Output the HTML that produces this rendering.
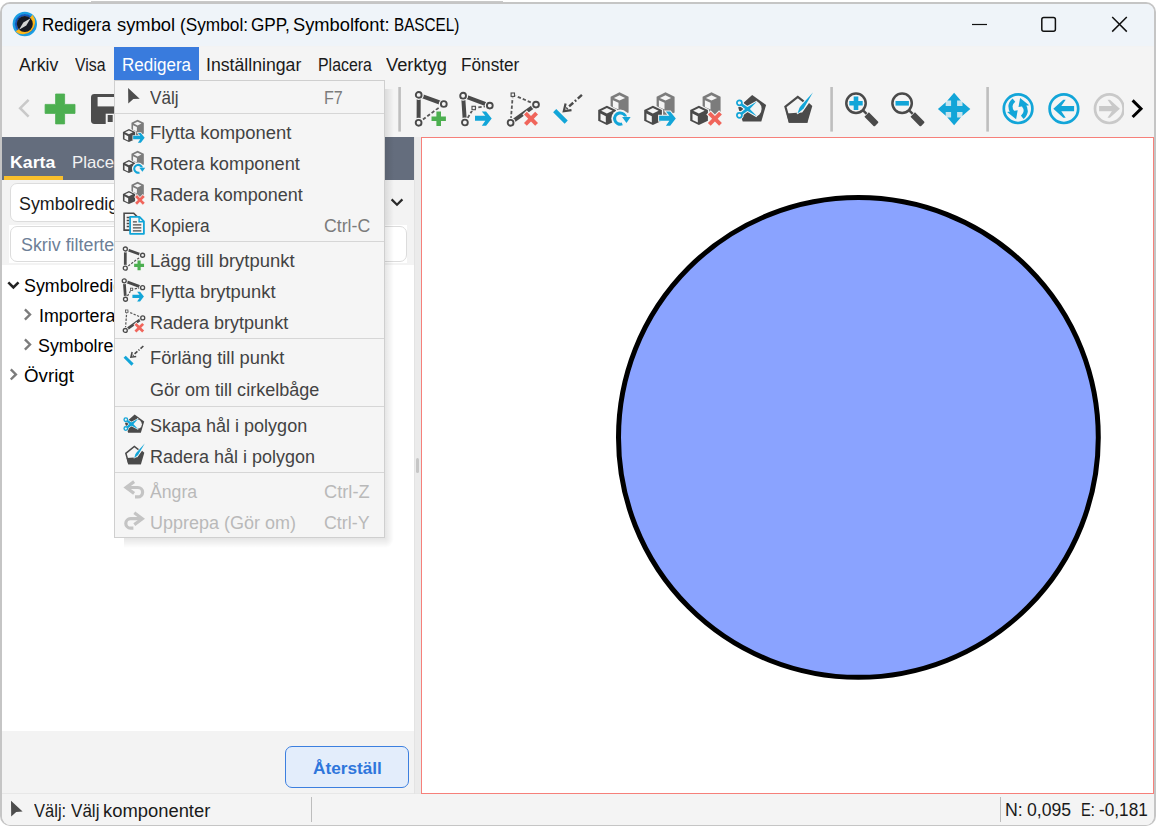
<!DOCTYPE html>
<html lang="sv">
<head>
<meta charset="utf-8">
<title>Redigera symbol</title>
<style>
html,body{margin:0;padding:0}
body{width:1156px;height:826px;overflow:hidden;position:relative;background:#fff;font-family:"Liberation Sans",sans-serif;font-size:17.5px}
.abs{position:absolute}
.t{position:absolute;white-space:pre;line-height:1;transform-origin:0 50%;font-size:17.5px}
#desk{position:absolute;left:0;top:0;width:1156px;height:826px;background:#fff}
#win{position:absolute;left:0;top:2px;width:1156px;height:824px;box-sizing:border-box;border:2px solid #c5c5c5;border-bottom-width:1px;border-radius:10px;background:#f3f3f3;overflow:hidden}
#wi{position:absolute;left:-1px;top:-1px;width:1154px;height:821px}
#titlebar{position:absolute;left:0;top:0;width:1154px;height:43px;background:#eff4f9}
#chrome{position:absolute;left:0;top:44px;width:1154px;height:90px;background:#f4f4f4}
#mhl{position:absolute;left:113px;top:44px;width:85px;height:33px;background:#397bdd}
#tabs{position:absolute;left:1px;top:134px;width:412px;height:43px;background:#646d7d}
#tabul{position:absolute;left:3px;top:173px;width:59px;height:4px;background:#f9bf2c}
#lpanel{position:absolute;left:1px;top:177px;width:412px;height:613px;background:#f3f3f3}
#combo{position:absolute;left:9px;top:180px;width:366px;height:37px;border:1px solid #dcdcdc;border-radius:7px;background:#fff}
#filter{position:absolute;left:9px;top:223px;width:395px;height:34px;border:1px solid #dcdcdc;border-radius:7px;background:#fff}
#tree{position:absolute;left:1px;top:262px;width:412px;height:466px;background:#fff}
#split{position:absolute;left:413px;top:134px;width:7px;height:656px;background:#ebebeb}
#canvas{position:absolute;left:420px;top:134px;width:731px;height:655px;border:1px solid #f6807a;background:#fff}
#btn{position:absolute;left:284px;top:743px;width:122px;height:40px;border:1px solid #3c7fdf;border-radius:7px;background:#e3edfb}
#status{position:absolute;left:0;top:791px;width:1154px;height:33px;background:#f4f4f4}
.vsep{position:absolute;width:1px;background:#bdbdbd}
#menu{position:absolute;left:114px;top:80px;width:269px;height:456px;border:1px solid #cfcfcf;background:#f5f5f5;}
.sh{position:absolute;pointer-events:none}
.msep{position:absolute;left:0;width:269px;height:1px;background:#d6d6d6}
svg{position:absolute;overflow:visible}
</style>
</head>
<body>
<div id="desk"><div class="abs" style="left:91px;top:1px;width:412px;height:1px;background:#c9c9c9"></div></div>
<div id="win"><div id="wi">
  <div id="titlebar"></div>
  <div id="chrome"></div>
  <div id="mhl"></div>
  <div id="tabs"></div><div id="tabul"></div>
  <div id="lpanel"></div>
  <div class="abs" style="left:8px;top:222px;width:398px;height:38px;background:#fff"></div>
  <div id="combo"></div>
  <div id="filter"></div>
  <div id="tree"></div>
  <div id="split"></div>
  <div id="canvas"></div>
  <div id="btn"></div>
  <div id="status"></div>
  <div class="abs" style="left:1px;top:790px;width:419px;height:1px;background:#e7e7e7"></div>
  <div class="vsep" style="left:310px;top:794px;height:25px"></div>
  <div class="vsep" style="left:999px;top:794px;height:25px"></div>
</div></div>
<!-- page-coordinate overlay: text + vector art, coordinates are absolute page pixels -->
<div id="ov" class="abs" style="left:0;top:0;width:1156px;height:826px;overflow:hidden">
<span class="t" style="left:42.4px;top:17.0px;color:#000;transform:scaleX(0.9714)">Redigera</span>
<span class="t" style="left:116.6px;top:17.0px;color:#000;transform:scaleX(1.0491)">symbol</span>
<span class="t" style="left:179.5px;top:17.0px;color:#000;transform:scaleX(0.9851)">(Symbol:</span>
<span class="t" style="left:251.0px;top:17.0px;color:#000;transform:scaleX(0.9811)">GPP,</span>
<span class="t" style="left:293.1px;top:17.0px;color:#000;transform:scaleX(1.0456)">Symbolfont:</span>
<span class="t" style="left:393.9px;top:17.0px;color:#000;transform:scaleX(0.8726)">BASCEL)</span>
<span class="t" style="left:19.3px;top:56.8px;color:#1a1a1a;transform:scaleX(1.0103)">Arkiv</span>
<span class="t" style="left:74.7px;top:56.8px;color:#1a1a1a;transform:scaleX(0.9059)">Visa</span>
<span class="t" style="left:121.5px;top:56.8px;color:#fff;transform:scaleX(0.9729)">Redigera</span>
<span class="t" style="left:206.0px;top:56.8px;color:#1a1a1a;transform:scaleX(1.0098)">Inställningar</span>
<span class="t" style="left:317.8px;top:56.8px;color:#1a1a1a;transform:scaleX(0.9086)">Placera</span>
<span class="t" style="left:385.6px;top:56.8px;color:#1a1a1a;transform:scaleX(1.0456)">Verktyg</span>
<span class="t" style="left:461.4px;top:56.8px;color:#1a1a1a;transform:scaleX(0.9828)">Fönster</span>
<span class="t" style="left:9.9px;top:153.8px;color:#fff;font-size:16.5px;font-weight:700;transform:scaleX(1.0732)">Karta</span>
<span class="t" style="left:72.2px;top:153.8px;color:#f2f2f2;font-size:16.5px;transform:scaleX(1.0200)">Placera</span>
<span class="t" style="left:18.5px;top:195.9px;color:#1a1a1a;transform:scaleX(1.0200)">Symbolredigering</span>
<span class="t" style="left:20.7px;top:236.5px;color:#6d7f97;transform:scaleX(1.0200)">Skriv filtertext här</span>
<span class="t" style="left:23.6px;top:277.8px;color:#000;transform:scaleX(1.0200)">Symbolredigering</span>
<span class="t" style="left:38.5px;top:307.8px;color:#000;transform:scaleX(1.0200)">Importerade symboler</span>
<span class="t" style="left:37.6px;top:337.8px;color:#000;transform:scaleX(1.0200)">Symbolredigering</span>
<span class="t" style="left:23.7px;top:367.8px;color:#000;transform:scaleX(1.0696)">Övrigt</span>
<span class="t" style="left:312.6px;top:759.5px;color:#2f76db;font-size:16.5px;font-weight:700;transform:scaleX(1.0437)">Återställ</span>
<span class="t" style="left:33.5px;top:803.3px;color:#1a1a1a;transform:scaleX(0.9455)">Välj:</span>
<span class="t" style="left:70.6px;top:803.3px;color:#1a1a1a;transform:scaleX(0.9750)">Välj</span>
<span class="t" style="left:103.4px;top:803.3px;color:#1a1a1a;transform:scaleX(1.0505)">komponenter</span>
<span class="t" style="left:1005.2px;top:802.4px;color:#1a1a1a;transform:scaleX(1.0133)">N:</span>
<span class="t" style="left:1026.5px;top:802.4px;color:#1a1a1a;transform:scaleX(1.0071)">0,095</span>
<span class="t" style="left:1080.9px;top:802.4px;color:#1a1a1a;transform:scaleX(0.8357)">E:</span>
<span class="t" style="left:1099.3px;top:802.4px;color:#1a1a1a;transform:scaleX(0.9833)">-0,181</span>
<svg id="art" width="1156" height="826" viewBox="0 0 1156 826" style="left:0;top:0">
<defs>
  <path id="g-arrow" d="M0 4.2 H10.3 L6.8 0 H11.1 L16.7 6.9 L11.1 14.1 H6.8 L10.3 9.1 H0 Z" fill="#12a5d8" stroke="#f4f4f4" stroke-width="2" paint-order="stroke"/>
  <path id="g-plus" d="M-2.3 -7.2 H2.3 V-2.3 H7.2 V2.3 H2.3 V7.2 H-2.3 V2.3 H-7.2 V-2.3 H-2.3 Z" fill="#4caf50" stroke="#f4f4f4" stroke-width="2" paint-order="stroke"/>
  <path id="g-x" d="M-4.2 -7 L0 -2.8 L4.2 -7 L7 -4.2 L2.8 0 L7 4.2 L4.2 7 L0 2.8 L-4.2 7 L-7 4.2 L-2.8 0 L-7 -4.2 Z" fill="#f0655b" stroke="#f4f4f4" stroke-width="2.2" paint-order="stroke"/>
  <g id="g-cubes">
    <path d="M21.5 0.2 L30.6 4.75 V20.4 L21.5 25 L12.6 20.4 V4.75 Z" fill="#7c7c7c"/>
    <path d="M21.5 3.2 L27.1 5.9 L21.5 8.6 L15.9 5.9 Z" fill="#f4f4f4"/>
    <path d="M14.9 8.2 L20.5 10.8 V17.6 L14.9 14.9 Z" fill="#f4f4f4"/>
    <path d="M8.9 12.3 L19.1 17.4 V29.5 L8.9 34.3 L-1 29.5 V17.4 Z" fill="#f4f4f4"/>
    <path d="M8.9 13.7 L17.9 18.1 V28.7 L8.9 32.9 L0.2 28.7 V18.1 Z" fill="#4a4a4a"/>
    <path d="M8.9 15.9 L14.6 18.7 L8.9 21.5 L3.2 18.7 Z" fill="#f4f4f4"/>
    <path d="M2.5 21.5 L7.8 24.2 V30.6 L2.5 28 Z" fill="#f4f4f4"/>
  </g>
  <g id="ic-addbp">
    <path d="M3.7 2.9 L28.8 12 M3.7 2.9 L3.6 30.8" stroke="#4a4a4a" stroke-width="4" fill="none"/>
    <path d="M3.6 30.8 L28.8 12" stroke="#585858" stroke-width="1.8" stroke-dasharray="3.4 2" fill="none"/>
    <circle cx="3.7" cy="2.9" r="5.1" fill="#f4f4f4"/><circle cx="28.8" cy="12" r="5.1" fill="#f4f4f4"/><circle cx="3.6" cy="30.8" r="5.1" fill="#f4f4f4"/><g fill="#f4f4f4" stroke="#4a4a4a" stroke-width="1.9"><circle cx="3.7" cy="2.9" r="2.9"/><circle cx="28.8" cy="12" r="2.9"/><circle cx="3.6" cy="30.8" r="2.9"/></g>
    <use href="#g-plus" x="23.7" y="26.8"/>
  </g>
  <g id="ic-movebp">
    <path d="M2.1 3.7 L28.8 13.6 M2.1 3.7 L3.9 30.5" stroke="#4a4a4a" stroke-width="4" fill="none"/>
    <path d="M3.9 30.5 L12.7 16 L28.8 13.6" stroke="#585858" stroke-width="1.8" stroke-dasharray="3.4 2" fill="none"/>
    <circle cx="2.1" cy="3.7" r="5.1" fill="#f4f4f4"/><circle cx="28.8" cy="13.6" r="5.1" fill="#f4f4f4"/><circle cx="3.9" cy="30.5" r="5.1" fill="#f4f4f4"/><g fill="#f4f4f4" stroke="#4a4a4a" stroke-width="1.9"><circle cx="2.1" cy="3.7" r="2.9"/><circle cx="28.8" cy="13.6" r="2.9"/><circle cx="3.9" cy="30.5" r="2.9"/></g>
    <rect x="9.8" y="13.1" width="5.8" height="5.8" fill="#f4f4f4"/><rect x="11.0" y="14.3" width="3.4" height="3.4" fill="#f4f4f4" stroke="#4a4a4a" stroke-width="1.1"/>
    <use href="#g-arrow" x="14" y="19.6"/>
  </g>
  <g id="ic-delbp">
    <path d="M5.8 2.7 L29 12.6 M5.8 2.7 L3.6 30.8" stroke="#585858" stroke-width="1.8" stroke-dasharray="3.4 2" fill="none"/>
    <path d="M3.6 30.8 L29 12.6" stroke="#4a4a4a" stroke-width="4" fill="none"/>
    <circle cx="29" cy="12.6" r="5.1" fill="#f4f4f4"/><circle cx="3.6" cy="30.8" r="5.1" fill="#f4f4f4"/><g fill="#f4f4f4" stroke="#4a4a4a" stroke-width="1.9"><circle cx="29" cy="12.6" r="2.9"/><circle cx="3.6" cy="30.8" r="2.9"/></g>
    <rect x="2.9" y="-0.2" width="5.8" height="5.8" fill="#f4f4f4"/><rect x="4.1" y="1.0" width="3.4" height="3.4" fill="#f4f4f4" stroke="#4a4a4a" stroke-width="1.1"/>
    <use href="#g-x" x="24" y="26.8"/>
  </g>
  <g id="ic-extend">
    <path d="M2.7 18.6 L14.2 30.1" stroke="#12a5d8" stroke-width="4.4" fill="none"/>
    <path d="M29.9 2.9 L14.5 16.8" stroke="#4a4a4a" stroke-width="2.4" stroke-dasharray="5.5 2.2 1.8 2.2" fill="none"/>
    <path d="M13.6 11.6 L11.8 19.2 L19.5 18.2" stroke="#4a4a4a" stroke-width="2.2" fill="none"/>
  </g>
  <g id="ic-rotcomp">
    <use href="#g-cubes"/>
    <circle cx="22.3" cy="26.6" r="9" fill="#f4f4f4"/>
    <path d="M27.98 26.1 A5.7 5.7 0 1 0 24.25 31.96" stroke="#12a5d8" stroke-width="3" fill="none"/>
    <path d="M24.1 25 H32.6 L28.5 30.9 Z" fill="#12a5d8" stroke="#f4f4f4" stroke-width="1" paint-order="stroke"/>
  </g>
  <g id="ic-movecomp">
    <use href="#g-cubes"/>
    <use href="#g-arrow" x="15.1" y="19.6"/>
  </g>
  <g id="ic-delcomp">
    <use href="#g-cubes"/>
    <use href="#g-x" x="24.9" y="26.8"/>
  </g>
  <g id="ic-scissor">
    <clipPath id="cp-hole"><path d="M9.2 16.9 L40 -1.6 V35.4 Z"/></clipPath>
    <path d="M17.2 3 L31.1 13.1 L26.3 29.5 H7.7 L3.2 15.4 Z" fill="#4a4a4a"/>
    <circle cx="18.4" cy="16.9" r="8.2" fill="#f4f4f4" clip-path="url(#cp-hole)"/>
    <g stroke="#f4f4f4" stroke-width="2.2" fill="#f4f4f4"><circle cx="4.4" cy="10.8" r="3.2"/><circle cx="4.4" cy="23.3" r="3.2"/>
      <path d="M7.2 22.7 L14.1 17.7 L21.9 9.6 L12.2 15.2 L5.7 20.7 Z"/><path d="M5.7 13.4 L12.2 18.7 L21.9 24.2 L14.1 16.3 L7.2 11.4 Z"/></g>
    <path d="M7.2 22.7 L14.1 17.7 L21.9 9.6 L12.2 15.2 L5.7 20.7 Z" fill="#12a5d8"/><path d="M5.7 13.4 L12.2 18.7 L21.9 24.2 L14.1 16.3 L7.2 11.4 Z" fill="#12a5d8"/>
    <g fill="#f4f4f4" stroke="#12a5d8" stroke-width="1.7"><circle cx="4.4" cy="10.8" r="2.5"/><circle cx="4.4" cy="23.3" r="2.5"/></g>
  </g>
  <g id="ic-scissor-s">
    <clipPath id="cp-hole-s"><path d="M11 16.9 L40 0.5 V33.3 Z"/></clipPath>
    <path d="M17.2 3 L31.1 13.1 L26.3 29.5 H7.7 L3.2 15.4 Z" fill="#4a4a4a"/>
    <circle cx="20.3" cy="17.2" r="7.4" fill="#f4f4f4" clip-path="url(#cp-hole-s)"/>
    <g stroke="#f4f4f4" stroke-width="1.6" fill="#f4f4f4"><circle cx="4.4" cy="10.6" r="3.3"/><circle cx="4.4" cy="23.5" r="3.3"/>
      <path d="M7.4 23.1 L14.6 17.9 L22.4 9.2 L12.2 14.8 L5.4 20.6 Z"/><path d="M5.5 13.5 L12.2 19.2 L22.4 24.6 L14.6 16.0 L7.4 10.9 Z"/></g>
    <path d="M7.4 23.1 L14.6 17.9 L22.4 9.2 L12.2 14.8 L5.4 20.6 Z" fill="#12a5d8"/><path d="M5.5 13.5 L12.2 19.2 L22.4 24.6 L14.6 16.0 L7.4 10.9 Z" fill="#12a5d8"/>
    <g fill="#f4f4f4" stroke="#12a5d8" stroke-width="2"><circle cx="4.4" cy="10.6" r="2.6"/><circle cx="4.4" cy="23.5" r="2.6"/></g>
  </g>
  <g id="ic-pen">
    <path d="M26.4 29.6 H8.6 L4.4 14.7 L16.8 4.8 L23.2 9.8" fill="none" stroke="#4a4a4a" stroke-width="2.2"/>
    <path d="M5.6 21.6 L16.2 20.8 L21.2 20.4 L28 11 L31.3 13.9 L26.4 30.7 H7.9 Z" fill="#4a4a4a"/>
    <path d="M31.9 0.4 L22.8 16.2 L21 18.1 L16.5 21.4 L18.4 16.1 L19.7 13.9 Z" fill="#12a5d8" stroke="#f4f4f4" stroke-width="1.6" paint-order="stroke" stroke-linejoin="round"/>
  </g>
  <g id="ic-lens">
    <circle cx="17" cy="11.3" r="9.7" fill="none" stroke="#4a4a4a" stroke-width="2.5"/>
    <path d="M23.8 18.1 L27.6 21.9" stroke="#4a4a4a" stroke-width="2.4" fill="none"/>
    <path d="M25.4 24.8 L29.9 20.3 L39 29.4 Q39.8 30.2 39 31 L36.1 33.9 Q35.3 34.7 34.5 33.9 Z" fill="#4a4a4a"/>
  </g>
  <g id="ic-back">
    <circle cx="0" cy="0" r="14.3" fill="none" stroke-width="2.7"/>
    <path d="M-10.6 0 L-0.6 -9 H1.8 L-2.6 -2.6 H10.2 V2.6 H-2.6 L1.8 9 H-0.6 Z" stroke="none"/>
  </g>
  <g id="ic-copy">
    <path d="M0.8 0.8 H10.4 L14 4.4 V17.6 H0.8 Z" fill="#f4f4f4" stroke="#4a4a4a" stroke-width="1.6"/>
    <path d="M3.4 5 H9 M3.4 8 H6 M3.4 11 H6 M3.4 14 H6" stroke="#4a4a4a" stroke-width="1.3"/>
    <path d="M6.8 4.4 H16.2 L20.6 8.8 V21.3 H6.8 Z" fill="#f4f4f4" stroke="#12a5d8" stroke-width="1.8" stroke-linejoin="round"/>
    <path d="M15.8 4.6 V9.2 H20.4" fill="none" stroke="#12a5d8" stroke-width="1.4"/>
    <path d="M9.6 9.4 H13.6 M9.6 12.4 H18 M9.6 15.4 H18 M9.6 18.4 H18" stroke="#4a4a4a" stroke-width="1.3"/>
  </g>
  <g id="ic-undo" fill="none" stroke-width="3.2">
    <path d="M9.9 0.6 L1.9 6.5 L9.9 12.4" stroke-linejoin="miter"/>
    <path d="M2.6 6.5 H13.7 A4.7 4.7 0 0 1 13.7 15.9 H10.8"/>
  </g>
</defs>

<!-- app icon -->
<g transform="translate(24.8 24)">
  <circle r="10.9" fill="none" stroke="#1b9ee3" stroke-width="2.6"/>
  <circle r="8.9" fill="none" stroke="#1458bd" stroke-width="2.2"/>
  <path d="M7.8 -9.3 A12.2 12.2 0 0 1 -9.3 7.8 L-6 5 A7.8 7.8 0 0 0 5 -6 Z" fill="#fbb71d"/>
  <circle r="8" fill="#171923"/>
  <path d="M-5.8 5.8 L-1.5 -1.5 L5.8 -5.8 L1.5 1.5 Z" fill="#d4d4d4"/>
</g>
<!-- window controls -->
<path d="M972 24.5 H987" stroke="#111" stroke-width="1.2" fill="none"/>
<rect x="1041.8" y="17.4" width="13.6" height="13.8" rx="2" fill="none" stroke="#111" stroke-width="1.5"/>
<path d="M1112.2 17 L1126.8 31.6 M1126.8 17 L1112.2 31.6" stroke="#111" stroke-width="1.5" fill="none"/>
<!-- toolbar left -->
<path d="M28.6 99.8 L20.2 108.2 L28.6 116.6" stroke="#c9c9c9" stroke-width="2.6" fill="none"/>
<path d="M55.6 94 H64.6 V104.4 H75 V113.4 H64.6 V123.9 H55.6 V113.4 H45.1 V104.4 H55.6 Z" fill="#4caf50" stroke="#4caf50" stroke-width="0.8" stroke-linejoin="round"/>
<g>
  <rect x="91" y="94" width="30" height="30" rx="3.4" fill="#4d4d4d"/>
  <rect x="97.6" y="97" width="20" height="9.4" fill="#f4f4f4"/>
  <rect x="105.7" y="113.7" width="12" height="10.4" fill="#f4f4f4"/>
  <rect x="107.7" y="115" width="5" height="7" fill="#4d4d4d"/>
</g>
<g stroke="#bebebe" stroke-width="2.6" fill="none">
  <path d="M399.6 87 V131.6"/><path d="M831.6 87 V131.6"/><path d="M987.6 87 V131.6"/>
</g>
<use href="#ic-addbp" x="415" y="92"/>
<use href="#ic-movebp" x="461" y="92"/>
<use href="#ic-delbp" x="507" y="92"/>
<use href="#ic-extend" x="552" y="92"/>
<use href="#ic-rotcomp" x="598" y="92"/>
<use href="#ic-movecomp" x="644" y="92"/>
<use href="#ic-delcomp" x="690" y="92"/>
<use href="#ic-scissor" x="735" y="92"/>
<use href="#ic-pen" x="781" y="92"/>
<use href="#ic-lens" x="839" y="92"/>
<path d="M853.7 96.6 H858.3 V101 H862.7 V105.6 H858.3 V110 H853.7 V105.6 H849.3 V101 H853.7 Z" fill="#12a5d8"/>
<use href="#ic-lens" x="885.1" y="92"/>
<rect x="895.5" y="101" width="13.4" height="4.6" fill="#12a5d8"/>
<g transform="translate(954.1 109)">
  <path d="M0 -16.2 L7.5 -7.5 L16.2 0 L7.5 7.5 L0 16.2 L-7.5 7.5 L-16.2 0 L-7.5 -7.5 Z" fill="#12a5d8"/>
  <path d="M3 -8.4 H8.4 V-3 H3 Z M-3 -8.4 H-8.4 V-3 H-3 Z M3 8.4 H8.4 V3 H3 Z M-3 8.4 H-8.4 V3 H-3 Z" fill="#f4f4f4" fill-opacity="0.8"/>
</g>
<g transform="translate(1018.1 108.7)" fill="#12a5d8" stroke="#12a5d8">
  <circle r="14.3" fill="none" stroke-width="2.7"/>
  <path d="M-4.2 -8.6 C-8.6 -5 -8.6 0 -5.4 3.6" fill="none" stroke-width="4.2"/>
  <path d="M-11 3.4 L-0.4 1.6 L-2 10.6 Z" stroke="none"/>
  <path d="M4.2 8.6 C8.6 5 8.6 0 5.4 -3.6" fill="none" stroke-width="4.2"/>
  <path d="M11 -3.4 L0.4 -1.6 L2 -10.6 Z" stroke="none"/>
</g>
<use href="#ic-back" x="1063.9" y="108.7" fill="#12a5d8" stroke="#12a5d8"/>
<g transform="translate(1109.3 108.7) scale(-1 1)"><use href="#ic-back" fill="#c9c9c9" stroke="#c9c9c9"/></g>
<rect x="1124" y="86" width="30" height="46" fill="#f4f4f4"/>
<path d="M1132.6 100.4 L1141 108.7 L1132.6 117" stroke="#000" stroke-width="3" fill="none"/>
<!-- left panel glyphs -->
<path d="M391.6 199.4 L397 204.8 L402.4 199.4" stroke="#2a2a2a" stroke-width="2.2" fill="none"/>
<path d="M8.3 282.4 L13.4 287.5 L18.5 282.4" stroke="#222" stroke-width="2.6" fill="none"/>
<g stroke="#7c7c7c" stroke-width="2.4" fill="none">
  <path d="M24.9 309.4 L30 314.5 L24.9 319.6"/>
  <path d="M24.9 339.4 L30 344.5 L24.9 349.6"/>
  <path d="M10.8 369.3 L15.9 374.4 L10.8 379.5"/>
</g>
<path d="M11 800.8 L22.6 811.5 L16.2 811.9 L11.2 816.4 Z" fill="#4d4d4d"/>
<rect x="416" y="458" width="3" height="15" rx="1.5" fill="#c6c6c6"/>
<rect x="414" y="137" width="1" height="657" fill="#e3e3e3"/>
<circle cx="858.4" cy="437.4" r="239.9" fill="#8aa3ff" stroke="#000" stroke-width="5"/>

</svg>
<div class="sh" style="left:124px;top:538px;width:261px;height:10px;background:linear-gradient(to bottom,rgba(0,0,0,.1),rgba(0,0,0,0))"></div>
<div class="sh" style="left:385px;top:89px;width:9px;height:449px;background:linear-gradient(to right,rgba(0,0,0,.1),rgba(0,0,0,0))"></div>
<div class="sh" style="left:385px;top:538px;width:9px;height:10px;background:radial-gradient(ellipse 9px 10px at 0 0,rgba(0,0,0,.1),rgba(0,0,0,0))"></div>
<div id="menu">
  <div class="msep" style="top:32px"></div>
  <div class="msep" style="top:160px"></div>
  <div class="msep" style="top:257px"></div>
  <div class="msep" style="top:325px"></div>
  <div class="msep" style="top:391px"></div>
</div>
<span class="t" style="left:150.1px;top:90.0px;color:#434343;transform:scaleX(0.9786)">Välj</span>
<span class="t" style="left:150.1px;top:125.2px;color:#434343;transform:scaleX(1.0530)">Flytta komponent</span>
<span class="t" style="left:150.1px;top:156.0px;color:#434343;transform:scaleX(1.0410)">Rotera komponent</span>
<span class="t" style="left:150.1px;top:187.0px;color:#434343;transform:scaleX(1.0262)">Radera komponent</span>
<span class="t" style="left:150.1px;top:217.8px;color:#434343;transform:scaleX(0.9900)">Kopiera</span>
<span class="t" style="left:150.1px;top:252.5px;color:#434343;transform:scaleX(1.0540)">Lägg till brytpunkt</span>
<span class="t" style="left:150.1px;top:283.7px;color:#434343;transform:scaleX(1.0492)">Flytta brytpunkt</span>
<span class="t" style="left:150.1px;top:314.5px;color:#434343;transform:scaleX(1.0291)">Radera brytpunkt</span>
<span class="t" style="left:150.1px;top:349.7px;color:#434343;transform:scaleX(1.0461)">Förläng till punkt</span>
<span class="t" style="left:150.1px;top:382.0px;color:#434343;transform:scaleX(1.0299)">Gör om till cirkelbåge</span>
<span class="t" style="left:150.1px;top:418.0px;color:#434343;transform:scaleX(1.0289)">Skapa hål i polygon</span>
<span class="t" style="left:150.1px;top:449.0px;color:#434343;transform:scaleX(1.0277)">Radera hål i polygon</span>
<span class="t" style="left:150.1px;top:483.9px;color:#b9b9b9;transform:scaleX(1.0085)">Ångra</span>
<span class="t" style="left:150.1px;top:515.0px;color:#b9b9b9;transform:scaleX(1.0277)">Upprepa (Gör om)</span>
<span class="t" style="left:323.6px;top:90.0px;color:#7b7b7b;transform:scaleX(0.9211)">F7</span>
<span class="t" style="left:323.5px;top:217.8px;color:#7b7b7b;transform:scaleX(1.0114)">Ctrl-C</span>
<span class="t" style="left:323.5px;top:483.9px;color:#b9b9b9;transform:scaleX(1.0429)">Ctrl-Z</span>
<span class="t" style="left:323.5px;top:515.0px;color:#b9b9b9;transform:scaleX(1.0186)">Ctrl-Y</span>
<svg id="art2" width="1156" height="826" viewBox="0 0 1156 826" style="left:0;top:0">

<path d="M128.1 88 L139.7 98.7 L133.3 99.1 L128.3 103.6 Z" fill="#4d4d4d"/>
<use href="#ic-movecomp" transform="translate(122.8 119.5) scale(0.6875)"/>
<use href="#ic-rotcomp" transform="translate(122.8 150.5) scale(0.6875)"/>
<use href="#ic-delcomp" transform="translate(122.8 181.5) scale(0.6875)"/>
<use href="#ic-copy" x="123.3" y="212.5"/>
<use href="#ic-addbp" transform="translate(122.8 247) scale(0.6875)"/>
<use href="#ic-movebp" transform="translate(122.8 278.3) scale(0.6875)"/>
<use href="#ic-delbp" transform="translate(122.8 309.3) scale(0.6875)"/>
<use href="#ic-extend" transform="translate(122.8 344) scale(0.6875)"/>
<use href="#ic-scissor-s" transform="translate(122.8 412.4) scale(0.6875)"/>
<use href="#ic-pen" transform="translate(122.8 443.2) scale(0.6875)"/>
<use href="#ic-undo" x="124.2" y="481" stroke="#c4c4c4"/>
<g transform="translate(268.4 0) scale(-1 1)"><use href="#ic-undo" x="124.2" y="512.2" stroke="#c4c4c4"/></g>

</svg>
</div>
</body>
</html>
